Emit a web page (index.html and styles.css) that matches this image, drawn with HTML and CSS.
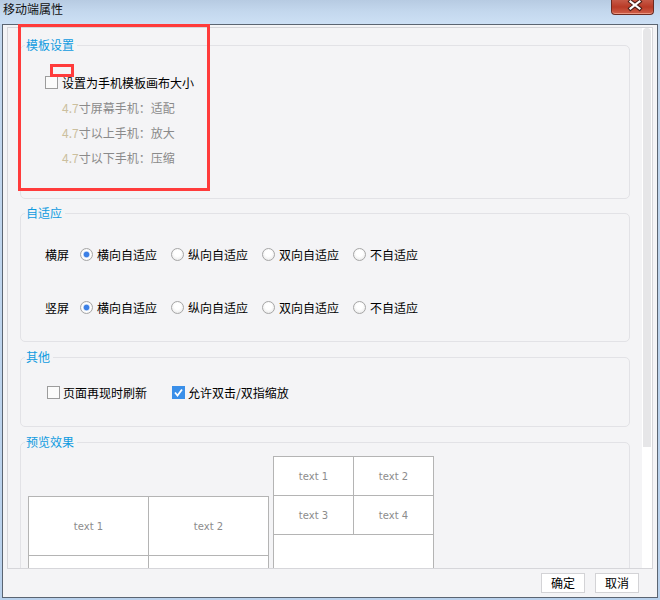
FILE: index.html
```html
<!DOCTYPE html>
<html lang="zh-CN">
<head>
<meta charset="utf-8">
<title>移动端属性</title>
<link rel="stylesheet" href="styles.css">
</head>
<body>
<div class="frame">
  <div class="titlebar">
    <span class="title">移动端属性</span>
    <div class="close">
      <svg width="41" height="14" viewBox="0 0 41 14">
        <path d="M18.5 1.5 L27.5 8.5 M27.5 1.5 L18.5 8.5" stroke="#4a1f18" stroke-width="4.2" stroke-linecap="square" fill="none"/>
        <path d="M18.5 1.5 L27.5 8.5 M27.5 1.5 L18.5 8.5" stroke="#ffffff" stroke-width="2.2" stroke-linecap="square" fill="none"/>
      </svg>
    </div>
  </div>
  <div class="window">
    <div class="pane">
      <div class="content">
        <fieldset class="group g1">
          <legend>模板设置</legend>
          <div class="body">
            <div class="row"><span class="cb"></span><span class="lbl">设置为手机模板画布大小</span></div>
            <div class="note"><span class="num">4.7</span>寸屏幕手机：适配</div>
            <div class="note"><span class="num">4.7</span>寸以上手机：放大</div>
            <div class="note"><span class="num">4.7</span>寸以下手机：压缩</div>
          </div>
        </fieldset>
        <fieldset class="group g2">
          <legend>自适应</legend>
          <div class="body">
            <div class="radio-row">
              <span class="rlabel">横屏</span>
              <span class="opt"><span class="rb on"></span>横向自适应</span>
              <span class="opt"><span class="rb"></span>纵向自适应</span>
              <span class="opt"><span class="rb"></span>双向自适应</span>
              <span class="opt"><span class="rb"></span>不自适应</span>
            </div>
            <div class="radio-row">
              <span class="rlabel">竖屏</span>
              <span class="opt"><span class="rb on"></span>横向自适应</span>
              <span class="opt"><span class="rb"></span>纵向自适应</span>
              <span class="opt"><span class="rb"></span>双向自适应</span>
              <span class="opt"><span class="rb"></span>不自适应</span>
            </div>
          </div>
        </fieldset>
        <fieldset class="group g3">
          <legend>其他</legend>
          <div class="body">
            <span class="copt"><span class="cb"></span>页面再现时刷新</span>
            <span class="copt"><span class="cb on"><svg width="11" height="11" viewBox="0 0 11 11"><path d="M2 5.5 L4.5 8.5 L9 2.5" stroke="#fff" stroke-width="1.8" fill="none"/></svg></span>允许双击/双指缩放</span>
          </div>
        </fieldset>
        <fieldset class="group g4">
          <legend>预览效果</legend>
          <div class="body">
            <table class="tbl big">
              <colgroup><col class="c120"><col class="c120"></colgroup>
              <tr class="r59"><td>text 1</td><td>text 2</td></tr>
              <tr class="r59"><td></td><td></td></tr>
            </table>
            <table class="tbl small">
              <colgroup><col class="c80"><col class="c80"></colgroup>
              <tr class="r39"><td>text 1</td><td>text 2</td></tr>
              <tr class="r39"><td>text 3</td><td>text 4</td></tr>
              <tr class="r60"><td colspan="2"></td></tr>
            </table>
          </div>
        </fieldset>
      </div>
      <div class="scrollbar"><div class="thumb"></div></div>
    </div>
    <div class="footer">
      <button class="btn">确定</button>
      <button class="btn">取消</button>
    </div>
  </div>
  <div class="mark mark-big"></div>
  <div class="mark mark-small"></div>
</div>
</body>
</html>
```

FILE: styles.css
```css
* { box-sizing: border-box; }

body {
  margin: 0;
  width: 660px;
  height: 600px;
  overflow: hidden;
  background: linear-gradient(to bottom, #c4d8ee, #b9d1ec);
  font-family: "Noto Sans CJK SC", "Noto Sans", sans-serif;
  font-size: 12px;
  color: #000;
}

.frame {
  position: relative;
  height: 600px;
  display: flex;
  flex-direction: column;
}

.titlebar {
  height: 24px;
  flex: none;
  display: flex;
  justify-content: space-between;
  align-items: flex-start;
  padding: 0 6px 0 3px;
  background: linear-gradient(to bottom, #b7cbe2 0%, #c3d7ed 45%, #cde0f5 100%);
}

.title {
  line-height: 17px;
  color: #111;
}

.close {
  width: 43px;
  height: 15px;
  border: 1px solid #6b2a20;
  border-top: none;
  border-radius: 0 0 4px 4px;
  background: linear-gradient(to bottom, #c65a47 0%, #b93a26 50%, #d0604a 100%);
  box-shadow: inset 0 -1px 0 rgba(255, 190, 170, 0.6);
}

.close svg { display: block; }

.window {
  flex: 1;
  min-height: 0;
  margin: 0 2px 2px;
  border: 1px solid #5b6572;
  background: #f4f4f6;
  padding: 2px 4px 0;
  display: flex;
  flex-direction: column;
}

.pane {
  flex: 1;
  min-height: 0;
  border: 1px solid #d6d6da;
  display: flex;
  overflow: hidden;
  background: #f4f4f6;
}

.content {
  flex: 1;
  min-width: 0;
  padding: 9px 12px 0;
  overflow: hidden;
}

.scrollbar {
  width: 10px;
  flex: none;
  background: #ffffff;
}

.thumb {
  height: 419px;
  margin: 0 1px;
  background: #e6e6e8;
  border-radius: 4px 4px 0 0;
}

.group {
  margin: 0 0 7px;
  padding: 0;
  border: 1px solid #e2e2e6;
  border-radius: 5px;
  min-width: 0;
}

.g1 { margin-bottom: 6px; }

.group legend {
  margin-left: 4px;
  padding: 0 3px 0 1px;
  line-height: 16px;
  font-size: 12px;
  color: #0f9be0;
}

.g1 .body { padding: 17px 0 28px 24px; }

.row {
  display: flex;
  align-items: center;
  height: 25px;
}

.row .cb { margin-right: 4px; }

.note {
  line-height: 25px;
  padding-left: 17px;
  color: #8a8a8a;
}

.num { color: #cbbf9e; }

.cb {
  width: 13px;
  height: 13px;
  flex: none;
  display: inline-flex;
  align-items: center;
  justify-content: center;
  border: 1px solid #9c9c9c;
  background: #fbfbfb;
}

.cb.on {
  background: #3a8fe9;
  border-color: #3a8fe9;
}

.g2 .body { padding: 23px 0 24px 24px; }

.radio-row {
  display: flex;
  align-items: center;
  height: 20px;
}

.radio-row + .radio-row { margin-top: 33px; }

.rlabel { margin-right: 11px; }

.opt {
  display: flex;
  align-items: center;
  gap: 4px;
  margin-right: 14px;
}

.rb {
  width: 13px;
  height: 13px;
  flex: none;
  border-radius: 50%;
  border: 1px solid #a6a6a6;
  background: radial-gradient(circle at 50% 40%, #ffffff 35%, #e2e2e2 100%);
}

.rb.on {
  background: radial-gradient(circle at 50% 50%, #3b7fe6 0 2.4px, #cfdff6 3.2px, #ffffff 4px, #e2e2e2 100%);
}

.g3 .body {
  padding: 17px 0 24px 26px;
  display: flex;
  align-items: center;
  height: 61px;
}

.copt {
  display: flex;
  align-items: center;
  gap: 3px;
  height: 20px;
  margin-right: 25px;
}

.g4 .body {
  padding: 6px 0 0 7px;
  display: flex;
  align-items: flex-start;
  gap: 4px;
}

.tbl {
  border-collapse: collapse;
  table-layout: fixed;
  background: #ffffff;
}

.tbl td {
  border: 1px solid #b4b4b4;
  padding: 0;
  text-align: center;
  vertical-align: middle;
  font-family: "DejaVu Sans", sans-serif;
  font-size: 10px;
  color: #8c8c8c;
}

.big { width: 241px; margin-top: 40px; }
.small { width: 160px; }

.c120 { width: 120px; }
.c80 { width: 80px; }

.r59 td { height: 59px; }
.r39 td { height: 39px; }
.r60 td { height: 60px; }

.footer {
  flex: none;
  height: 28px;
  display: flex;
  justify-content: flex-end;
  gap: 10px;
  padding: 4px 14px 0 0;
}

.btn {
  width: 44px;
  height: 20px;
  padding: 0;
  border: 1px solid #d3d3d6;
  background: #ffffff;
  font-family: "Noto Sans CJK SC", sans-serif;
  font-size: 12px;
  line-height: 18px;
  color: #000;
}

.mark {
  position: absolute;
  border: 3px solid #ff3b3b;
}

.mark-big {
  left: 18px;
  top: 24px;
  width: 192px;
  height: 167px;
}

.mark-small {
  left: 50px;
  top: 64px;
  width: 24px;
  height: 13px;
}
```
